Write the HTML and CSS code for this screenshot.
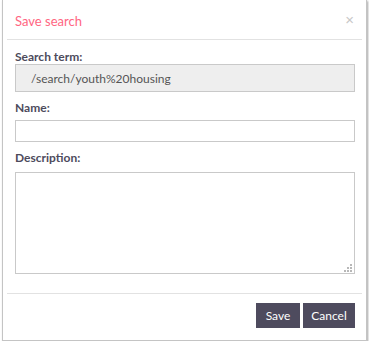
FILE: index.html
```html
<!DOCTYPE html>
<html lang="en">
<head>
    <meta charset="UTF-8">
    <title>Save search</title>
    <link rel="stylesheet" href="styles.css">
</head>
<body>
<div class="modal">
    <div class="modal-header">
        <h4 class="modal-title">Save search</h4>
        <span class="close">&times;</span>
    </div>
    <div class="modal-body">
        <label class="field-label first">Search term:</label>
        <input type="text" class="field field-readonly" value="/search/youth%20housing" readonly>
        <label class="field-label">Name:</label>
        <input type="text" class="field">
        <label class="field-label">Description:</label>
        <div class="area-wrap">
            <textarea class="field field-area"></textarea>
            <!-- resize grip -->
            <svg class="grip" width="8" height="8" viewBox="0 0 8 8">
                <rect x="6" y="0" width="2" height="2" fill="#b8b8b8"/>
                <rect x="3" y="3" width="2" height="2" fill="#b8b8b8"/>
                <rect x="6" y="3" width="2" height="2" fill="#b8b8b8"/>
                <rect x="0" y="6" width="2" height="2" fill="#b8b8b8"/>
                <rect x="3" y="6" width="2" height="2" fill="#b8b8b8"/>
                <rect x="6" y="6" width="2" height="2" fill="#b8b8b8"/>
            </svg>
        </div>
    </div>
    <div class="modal-footer">
        <button class="btn btn-save">Save</button>
        <button class="btn btn-cancel">Cancel</button>
    </div>
</div>
</body>
</html>
```
FILE: styles.css
```css
/* General styles */
body {
    font-family: Lato, 'Open Sans', sans-serif;
    background-color: #fff;
    margin: 0;
    padding: 0;
}

/* Dialog */
.modal {
    margin: -1px 2px 0;
    width: 365px;
    height: 342px;
    box-sizing: border-box;
    border: 1px solid #c4c4c4;
    box-shadow: 1px 2px 2px rgba(0, 0, 0, 0.35);
    background-color: #fff;
    padding: 0 4px;
    display: flex;
    flex-direction: column;
}

.modal-header {
    display: flex;
    justify-content: space-between;
    align-items: center;
    height: 40px;
    box-sizing: border-box;
    padding: 3px 8px 0;
    border-bottom: 1px solid #e2e2e2;
}

.modal-title {
    margin: 0;
    font-size: 13px;
    font-weight: normal;
    color: #ff6682;
}

.close {
    font-family: Arial, sans-serif;
    font-size: 15px;
    color: #c8c8c8;
    margin-top: -4px;
}

.modal-body {
    display: flex;
    flex-direction: column;
    padding: 10px 7px 0 8px;
    height: 254px;
    box-sizing: border-box;
    border-bottom: 1px solid #e2e2e2;
}

.field-label {
    font-size: 12px;
    font-weight: bold;
    color: #4d4b5c;
    line-height: 14px;
    margin-bottom: 5px;
}

.field-label.first {
    margin-bottom: 0;
}

.field {
    display: block;
    width: 100%;
    height: 22px;
    box-sizing: border-box;
    border: 1px solid #c9c9c9;
    background-color: #fff;
    margin: 0 0 9px;
    padding: 0 8px;
    font-family: Lato, 'Open Sans', sans-serif;
    font-size: 12px;
    color: #555;
    outline: none;
}

.field-readonly {
    height: 28px;
    background-color: #eeeeee;
    padding-left: 15px;
}

.area-wrap {
    position: relative;
    margin-top: 2px;
}

.field-area {
    height: 102px;
    resize: none;
    margin: 0;
}

.grip {
    position: absolute;
    right: 3px;
    bottom: 2px;
}

.modal-footer {
    display: flex;
    justify-content: flex-end;
    gap: 3px;
    padding: 9px 7px 0 0;
}

.btn {
    height: 25px;
    padding: 0;
    border: none;
    background-color: #4e4b5e;
    color: #fff;
    font-family: Lato, 'Open Sans', sans-serif;
    font-size: 12px;
}

.btn-save {
    width: 44px;
}

.btn-cancel {
    width: 52px;
}
```
